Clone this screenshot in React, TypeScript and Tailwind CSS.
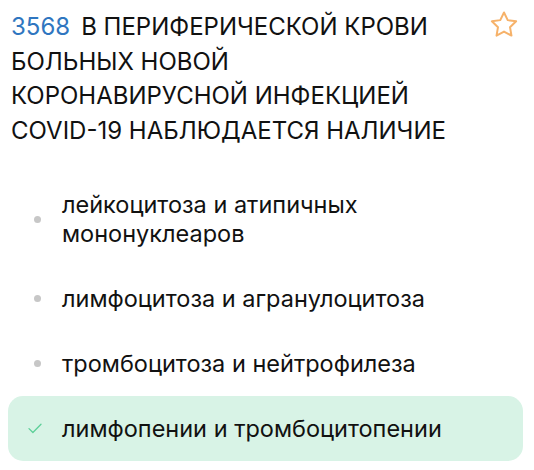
import React from 'react';

interface Answer {
    text: string;
    correct?: boolean;
}

const ANSWERS: Answer[] = [
    { text: 'лейкоцитоза и атипичных мононуклеаров' },
    { text: 'лимфоцитоза и агранулоцитоза' },
    { text: 'тромбоцитоза и нейтрофилеза' },
    { text: 'лимфопении и тромбоцитопении', correct: true },
];

function StarIcon() {
    return (
        <svg width="32" height="32" viewBox="0 0 24 24" fill="none" stroke="#f6b26a" strokeWidth="1.5" strokeLinejoin="round">
            <path d="M12 2.6l2.8 5.75 6.3.9-4.6 4.4 1.1 6.3L12 16.95l-5.6 3 1.1-6.3-4.6-4.4 6.3-.9z" />
        </svg>
    );
}

function CheckIcon() {
    return (
        <svg width="14" height="11" viewBox="0 0 14 11" fill="none" stroke="#5ccf98" strokeWidth="1.3" strokeLinecap="round" strokeLinejoin="round">
            <path d="M1 5.6l3.9 3.9L13 1.3" />
        </svg>
    );
}

export default function App() {
    return (
        <div className="w-[534px] h-[470px] bg-white overflow-hidden font-['Inter',sans-serif] text-[#111]">
            {/* Question */}
            <div className="flex items-start pl-[11px] pr-[14px] pt-[10px]">
                <h2 className="w-[440px] text-[24px] leading-[34.5px] uppercase">
                    <span className="text-[#2f76c0] mr-[11px]">3568</span>
                    В периферической крови больных новой коронавирусной инфекцией COVID-19 наблюдается наличие
                </h2>
                <div className="ml-auto -mt-[1px]">
                    <StarIcon />
                </div>
            </div>

            {/* Answers */}
            <div className="mt-[24px] pl-[8px] pr-[11px]">
                {ANSWERS.map((a) => (
                    <div
                        key={a.text}
                        className={`flex items-center py-[18px] rounded-[15px] ${a.correct ? 'bg-[#d8f3e6]' : ''}`}
                    >
                        <div className="w-[54px] flex justify-center shrink-0 pl-[4px]">
                            {a.correct ? (
                                <span className="block -ml-[4px]"><CheckIcon /></span>
                            ) : (
                                <span className="block w-[7px] h-[7px] rounded-full bg-[#c7c7c7]" />
                            )}
                        </div>
                        <span className="text-[23.5px] leading-[29px] max-w-[390px]">{a.text}</span>
                    </div>
                ))}
            </div>
        </div>
    );
}
